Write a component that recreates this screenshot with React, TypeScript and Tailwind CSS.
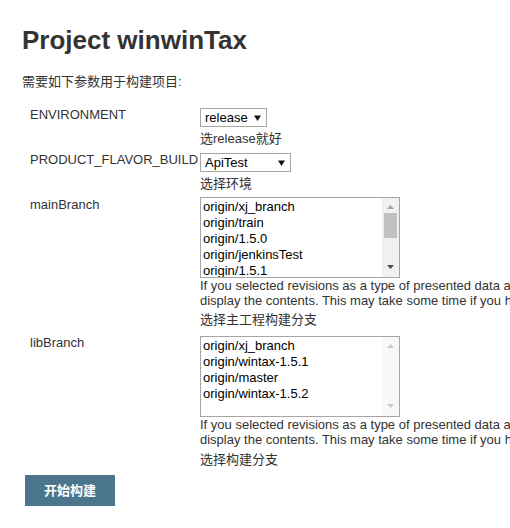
import type { ReactNode } from 'react'

const font = { fontFamily: '"Liberation Sans", Arial, "Noto Sans CJK SC", sans-serif' }

const helpLines = [
  'If you selected revisions as a type of presented data and you have many revisions, it may take a while to',
  'display the contents. This may take some time if you have a large number of revisions in the repository.',
]

function Caret() {
  return (
    <svg width="7" height="6" viewBox="0 0 7 6" className="shrink-0">
      <path d="M0 0.5h7L3.5 6z" fill="#111" />
    </svg>
  )
}

function Select({ value, width }: { value: string; width: string }) {
  return (
    <div className={`${width} h-[19px] mt-[1px] flex items-center justify-between border border-[#a6a6a6] bg-white pl-[4px] pr-[5px] text-[13px] leading-[16px] text-black`}>
      <span>{value}</span>
      <Caret />
    </div>
  )
}

function ListBox({ items, scroll }: { items: string[]; scroll: boolean }) {
  return (
    <div className="w-[200px] h-[81px] flex border border-[#a6a6a6] bg-white">
      <div className="flex-1 pl-[2px] pt-[1px] text-[13px] leading-[16px] text-black overflow-hidden">
        {items.map((i) => (
          <div key={i} className="whitespace-nowrap">{i}</div>
        ))}
      </div>
      <div className={`w-[17px] flex flex-col items-center ${scroll ? 'bg-[#f1f1f1]' : 'bg-[#f8f8f8]'}`}>
        <svg width="7" height="4" viewBox="0 0 7 4" className="mt-[7px]">
          <path d="M0 4h7L3.5 0z" fill={scroll ? '#a3a3a3' : '#c9c9c9'} />
        </svg>
        {scroll ? <div className="w-[13px] h-[25px] mt-[4px] bg-[#c1c1c1]" /> : null}
        <div className="flex-1" />
        <svg width="7" height="4" viewBox="0 0 7 4" className="mb-[8px]">
          <path d="M0 0h7L3.5 4z" fill={scroll ? '#505050' : '#c9c9c9'} />
        </svg>
      </div>
    </div>
  )
}

function Row({ label, children }: { label: string; children: ReactNode }) {
  return (
    <div className="flex pl-[30px]">
      <div className="w-[170px] shrink-0 text-[13px] leading-[16px] text-[#333] whitespace-nowrap">{label}</div>
      <div className="flex flex-col">{children}</div>
    </div>
  )
}

function Help() {
  return (
    <div className="text-[13px] leading-[15px] text-[#333] whitespace-nowrap">
      {helpLines.map((l) => (
        <div key={l}>{l}</div>
      ))}
    </div>
  )
}

export default function App() {
  return (
    <div className="w-[510px] h-[528px] overflow-hidden bg-white" style={font}>
      <h1 className="pl-[22px] pt-[25px] text-[26px] leading-[30px] font-bold text-[#333]">Project winwinTax</h1>
      <p className="pl-[22px] mt-[19px] text-[13px] leading-[16px] text-[#333]">需要如下参数用于构建项目:</p>

      <div className="mt-[17px]">
        <Row label="ENVIRONMENT">
          <Select value="release" width="w-[67px]" />
          <div className="mt-[4px] text-[13px] leading-[16px] text-[#333]">选release就好</div>
        </Row>
      </div>

      <div className="mt-[5px]">
        <Row label="PRODUCT_FLAVOR_BUILD">
          <Select value="ApiTest" width="w-[91px]" />
          <div className="mt-[4px] text-[13px] leading-[16px] text-[#333]">选择环境</div>
        </Row>
      </div>

      <div className="mt-[5px]">
        <Row label="mainBranch">
          <ListBox
            scroll
            items={['origin/xj_branch', 'origin/train', 'origin/1.5.0', 'origin/jenkinsTest', 'origin/1.5.1']}
          />
          <Help />
          <div className="mt-[4px] text-[13px] leading-[16px] text-[#333]">选择主工程构建分支</div>
        </Row>
      </div>

      <div className="mt-[7px]">
        <Row label="libBranch">
          <div className="mt-[1px]">
            <ListBox scroll={false} items={['origin/xj_branch', 'origin/wintax-1.5.1', 'origin/master', 'origin/wintax-1.5.2']} />
          </div>
          <Help />
          <div className="mt-[5px] text-[13px] leading-[16px] text-[#333]">选择构建分支</div>
        </Row>
      </div>

      <div className="pl-[25px] mt-[7px]">
        <button className="w-[90px] h-[31px] bg-[#4b758b] text-white text-[13px] font-bold">开始构建</button>
      </div>
    </div>
  )
}
